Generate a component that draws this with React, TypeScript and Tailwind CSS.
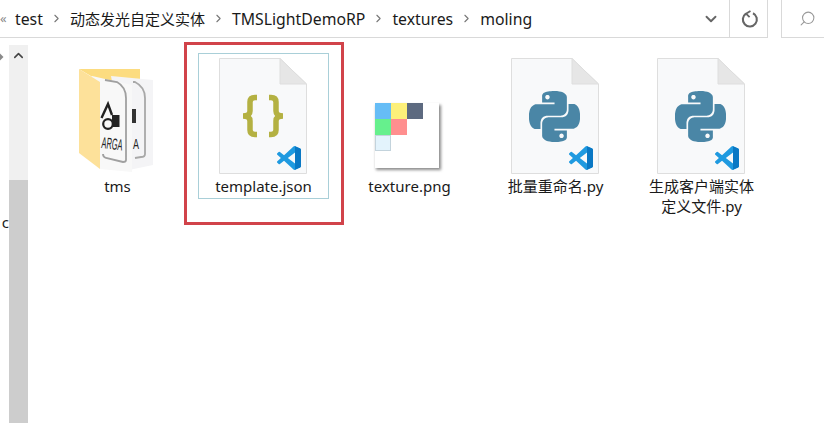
import { ChevronDown, ChevronRight, ChevronUp, Search } from 'lucide-react';
import type { ReactNode } from 'react';
import { SiPython } from 'react-icons/si';

const crumbs = [
  { text: 'test', size: 'text-[15.8px]' },
  { text: '动态发光自定义实体', size: 'text-[15px]' },
  { text: 'TMSLightDemoRP', size: 'text-[15.8px]' },
  { text: 'textures', size: 'text-[15.8px]' },
  { text: 'moling', size: 'text-[15.8px]' },
];

const vscodePath =
  'M23.15 2.587L18.21.21a1.494 1.494 0 0 0-1.705.29l-9.46 8.63-4.12-3.128a.999.999 0 0 0-1.276.057L.327 7.261A1 1 0 0 0 .326 8.74L3.899 12 .326 15.26a1 1 0 0 0 .001 1.479L1.65 17.94a.999.999 0 0 0 1.276.057l4.12-3.128 9.46 8.63a1.492 1.492 0 0 0 1.704.29l4.942-2.377A1.5 1.5 0 0 0 24 20.06V3.939a1.5 1.5 0 0 0-.85-1.352zm-5.146 14.861L10.826 12l7.178-5.448v10.896z';

export default function App() {
  return (
    <div
      className="relative flex h-[423px] w-[824px] flex-col overflow-hidden bg-white text-[#1a1a1a]"
      style={{ fontFamily: '"Noto Sans", "Noto Sans CJK SC", sans-serif' }}
    >
      <TopBar />

      <div className="flex flex-1">
        {/* Clipped nav pane */}
        <div className="flex w-[9px] flex-col overflow-hidden">
          <svg width="9" height="10" viewBox="0 0 9 10" className="mt-[14px]">
            <path d="M0 1.5 L3.5 5 L0 8.5 Z" fill="#8a8a8a" />
          </svg>
          <span className="mt-[150px] flex justify-end text-[15px] leading-5">c</span>
        </div>

        {/* Scrollbar */}
        <div className="mt-[7px] flex w-[19px] flex-col bg-[#f0f0f0]">
          <div className="flex h-[135px] justify-center pt-[3px]">
            <ChevronUp size={15} strokeWidth={2.5} className="text-[#444]" />
          </div>
          <div className="flex-1 bg-[#cdcdcd]" />
        </div>

        {/* Files */}
        <div className="flex items-start gap-[15px] pl-[24px] pt-[15px]">
          <Item label={['tms']} icon={<FolderIcon />} />
          <Item label={['template.json']} selected icon={<FileIcon><Braces /></FileIcon>} />
          <Item label={['texture.png']} icon={<TextureIcon />} />
          <Item label={['批量重命名.py']} icon={<FileIcon><SiPython x={34} y={37} size={51} color="#4a86a6" /></FileIcon>} />
          <Item label={['生成客户端实体', '定义文件.py']} icon={<FileIcon><SiPython x={34} y={37} size={51} color="#4a86a6" /></FileIcon>} />
        </div>
      </div>

      {/* Red annotation */}
      <div className="absolute left-[184px] top-[42px] h-[183px] w-[160px] border-[3px] border-[#d1434a]" />
    </div>
  );
}

function TopBar() {
  return (
    <div className="flex h-[38px] shrink-0">
      <div className="flex flex-1 items-center border-b border-[#d9d9d9]">
        <div className="flex w-[15px] items-center text-[#8a8a8a]">
          <span className="text-[13px] leading-none">«</span>
        </div>
        {crumbs.map((c, i) => (
          <div key={c.text} className="flex items-center">
            {i > 0 && <ChevronRight size={13} strokeWidth={2} className="mx-[7px] text-[#777]" />}
            <span className={`${c.size} leading-5`}>{c.text}</span>
          </div>
        ))}
        <div className="ml-auto flex w-[36px] justify-center">
          <ChevronDown size={18} strokeWidth={2.5} className="text-[#666]" />
        </div>
      </div>
      <div className="flex w-[39px] items-center justify-center border-x border-b border-[#d9d9d9] pl-[3px]">
        <svg width="18" height="18" viewBox="0 0 18 18" fill="none" stroke="#666" strokeWidth="2.1">
          <path d="M5 3.6 A7 7 0 1 0 12 3.2" />
          <path d="M9.5 1 L5 3.6 L8.6 7.2" strokeWidth="1.8" />
        </svg>
      </div>
      <div className="w-[13px]" />
      <div className="flex w-[43px] items-center justify-center border-b border-l border-[#d9d9d9] pl-[8px]">
        <Search size={17} strokeWidth={1.5} className="-scale-x-100 text-[#999]" />
      </div>
    </div>
  );
}

function Item({ label, icon, selected }: { label: string[]; icon: ReactNode; selected?: boolean }) {
  return (
    <div
      className={`flex h-[146px] w-[131px] flex-col items-center border ${
        selected ? 'border-[#a9cfd8]' : 'border-transparent'
      }`}
    >
      {icon}
      <div className="text-center text-[15px] leading-5">
        {label.map((l) => (
          <div key={l}>{l}</div>
        ))}
      </div>
    </div>
  );
}

function IconSvg({ children }: { children: ReactNode }) {
  return (
    <svg width="121" height="122" viewBox="0 0 121 122" className="shrink-0">
      {children}
    </svg>
  );
}

function FileIcon({ children }: { children: ReactNode }) {
  return (
    <IconSvg>
      <path d="M16.5 4.5 H77 L103.5 30 V119.5 H16.5 Z" fill="#f8f9fa" stroke="#dedede" />
      <path d="M77 4.5 L103.5 30 H77 Z" fill="#e6e6e6" stroke="#dedede" />
      {children}
      <svg x={74} y={92} width={24} height={24} viewBox="0 0 24 24">
        <path d={vscodePath} fill="#1f9ae0" />
        <path d="M18 0.2 L23.2 2.6 Q24 3.2 24 4 V20 Q24 21 23 21.5 L18 23.8 Z" fill="#0a78c4" />
      </svg>
    </IconSvg>
  );
}

function Braces() {
  return (
    <g fill="none" stroke="#b4b142" strokeWidth="5.5" strokeLinecap="butt">
      <path d="M54 43.5 H52 Q47 43.5 47 48 V57 Q47 62 40 62 Q47 62 47 67 V76 Q47 80.5 52 80.5 H54" />
      <path d="M66 43.5 H68 Q73 43.5 73 48 V57 Q73 62 80 62 Q73 62 73 67 V76 Q73 80.5 68 80.5 H66" />
    </g>
  );
}

function TextureIcon() {
  const cells = [
    { x: 26, y: 49, fill: '#66bdf6' },
    { x: 42, y: 49, fill: '#fdf07a' },
    { x: 58, y: 49, fill: '#5d6a80' },
    { x: 26, y: 65, fill: '#66f08d' },
    { x: 42, y: 65, fill: '#ff8f8f' },
    { x: 26, y: 81, fill: '#e3f3fc' },
  ];
  return (
    <IconSvg>
      <defs>
        <filter id="tex-shadow" x="-20%" y="-20%" width="140%" height="140%">
          <feGaussianBlur stdDeviation="1.5" />
        </filter>
      </defs>
      <rect x={27} y={51} width={65} height={65} fill="#8a8a8a" filter="url(#tex-shadow)" />
      <rect x={26} y={49} width={64} height={65} fill="#fff" />
      {cells.map((c) => (
        <rect key={`${c.x}-${c.y}`} x={c.x} y={c.y} width={16} height={16} fill={c.fill} />
      ))}
      <rect x={26.5} y={81.5} width={15} height={15} fill="none" stroke="#c3d3dc" />
    </IconSvg>
  );
}

function FolderIcon() {
  return (
    <IconSvg>
      <path d="M22 15 H83 V28 H44 Z" fill="#fcdc80" />
      {/* Back card */}
      <path d="M54 22 L96 26 V111 L72 116 Z" fill="#f4f4f6" />
      <path d="M76 28 H78 Q88 33 88 44 V100 Q88 103 84 103 L78 104" fill="none" stroke="#a8a8a8" strokeWidth="1.8" />
      <rect x={75} y={55} width={4} height={14} fill="#333" />
      <text
        x={76}
        y={95}
        fontSize="15"
        fill="#222"
        fontFamily="Liberation Sans, sans-serif"
        textLength={6}
        lengthAdjust="spacingAndGlyphs"
      >
        A
      </text>
      {/* Front card */}
      <path d="M35 22 L75 31 V118 L43 115 Z" fill="#f8f8f8" />
      <path
        d="M48 26 L60 28 Q69 33 69 44 V106 Q69 108 66 108 L49 104 Q46 103 46 100"
        fill="none"
        stroke="#a0a0a0"
        strokeWidth="1.8"
      />
      <path d="M44.5 64 L51 50 L55 61" fill="none" stroke="#222" strokeWidth="2.4" />
      <rect x={55} y={61} width={7.5} height={12} fill="#222" />
      <circle cx={51} cy={70} r={4.8} fill="#f8f8f8" stroke="#222" strokeWidth="2.2" />
      <text
        x={44}
        y={94}
        fontSize="16"
        fill="#222"
        fontFamily="Liberation Sans, sans-serif"
        textLength={21}
        lengthAdjust="spacingAndGlyphs"
        transform="rotate(7 44 94)"
      >
        ARGA
      </text>
      {/* Folder front panel */}
      <path d="M22 15 L43 28 V115 L22 99 Z" fill="#fde19a" />
    </IconSvg>
  );
}
